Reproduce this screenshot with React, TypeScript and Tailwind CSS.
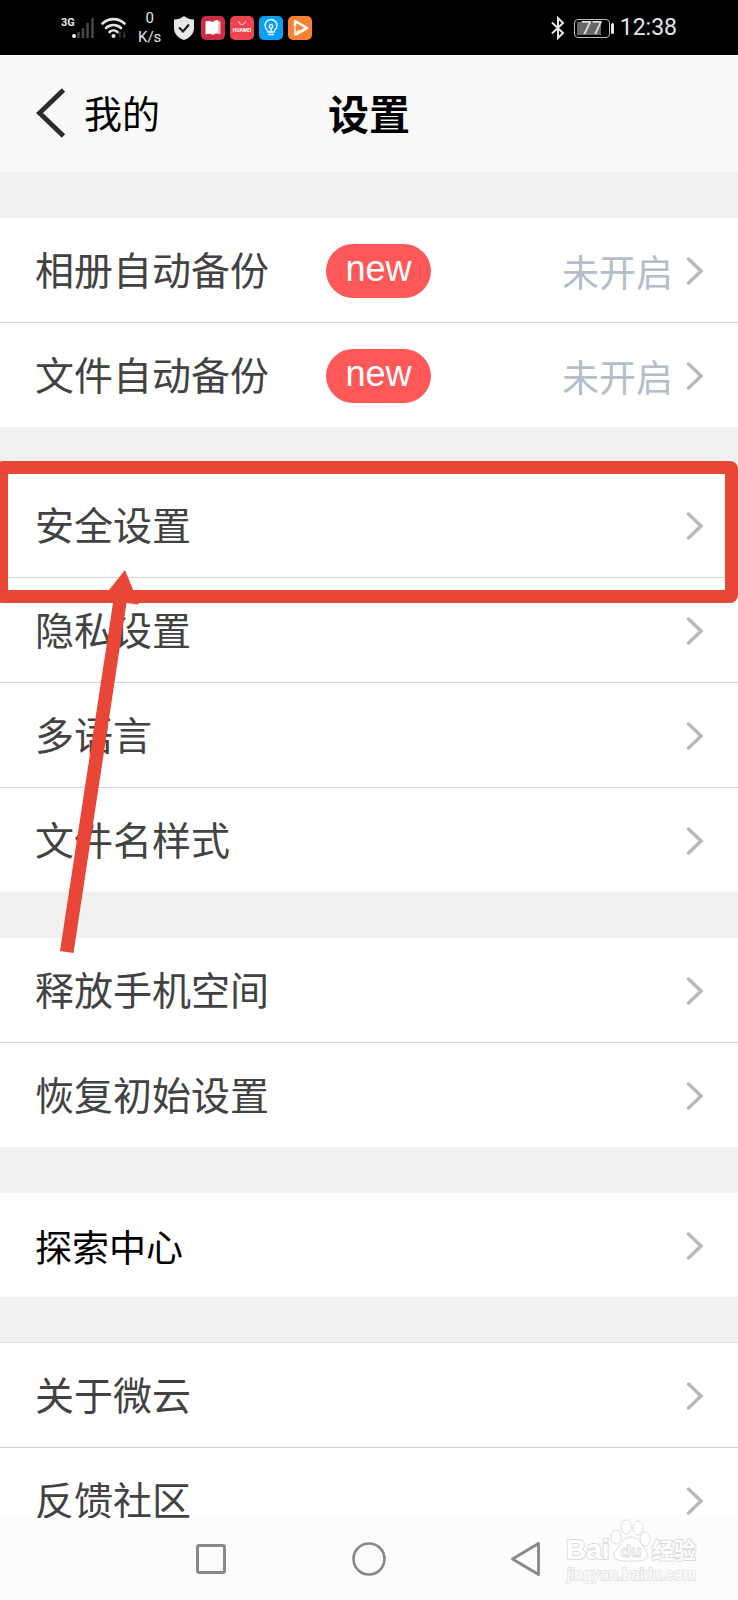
import React from 'react';

interface SettingItem {
  label: string;
  status?: string;
  isNew?: boolean;
  strong?: boolean;
}

interface SettingGroup {
  id: string;
  highlighted?: boolean;
  topLine?: boolean;
  items: SettingItem[];
}

const groups: SettingGroup[] = [
  {
    id: 'backup',
    items: [
      { label: '相册自动备份', status: '未开启', isNew: true },
      { label: '文件自动备份', status: '未开启', isNew: true },
    ],
  },
  {
    id: 'general',
    highlighted: true,
    items: [
      { label: '安全设置' },
      { label: '隐私设置' },
      { label: '多语言' },
      { label: '文件名样式' },
    ],
  },
  {
    id: 'storage',
    items: [{ label: '释放手机空间' }, { label: '恢复初始设置' }],
  },
  {
    id: 'explore',
    items: [{ label: '探索中心', strong: true }],
  },
  {
    id: 'about',
    topLine: true,
    items: [{ label: '关于微云' }, { label: '反馈社区' }],
  },
];

function StatusBar() {
  return (
    <div className="flex h-[55px] items-center justify-between bg-black px-[61px] pt-px font-[Roboto,sans-serif] text-[#e6e6e6]">
      <div className="flex items-center">
        <svg width="34" height="24" viewBox="0 0 34 24">
          <text x="0" y="10" fontSize="11" fontWeight="700" fill="#e6e6e6" fontFamily="Roboto, sans-serif">3G</text>
          <circle cx="13" cy="20" r="2" fill="#f0f0f0" />
          <path d="M17.500 22v-6M22 22V12M26.500 22V7M31.500 22V2" stroke="#484848" strokeWidth="2.500" />
        </svg>
        <svg className="ml-1.5" width="26" height="24" viewBox="0 0 26 24" fill="none" stroke="#e6e6e6" strokeWidth="2.600" strokeLinecap="round">
          <path d="M1.500 7.500a16 16 0 0 1 22 0" />
          <path d="M5 12a11 11 0 0 1 15 0" />
          <path d="M8.500 16a6 6 0 0 1 8 0" />
          <circle cx="12.500" cy="20" r="2" fill="#e6e6e6" stroke="none" />
          <path d="M19 16.500v5M19 16.500l-1.500 2M23 16.500v5M23 21.500l1.500-2" stroke="#555" strokeWidth="1" />
        </svg>
        <div className="ml-[11px] flex flex-col items-center text-[15px] leading-[19px]">
          <span>0</span>
          <span>K/s</span>
        </div>
        <svg className="ml-[13px]" width="20" height="24" viewBox="0 0 20 24">
          <path d="M10 0c3 2.500 6 3.500 10 3.500V12c0 6-4.500 10-10 12C4.500 22 0 18 0 12V3.500C4 3.500 7 2.500 10 0z" fill="#e8e8e8" />
          <path d="M5 11.500l4 4 6-7" fill="none" stroke="#1c1c1c" strokeWidth="2.200" />
        </svg>
        <div className="ml-[7px] flex gap-[5px]">
          <svg width="24" height="24" viewBox="0 0 24 24">
            <rect width="24" height="24" rx="5" fill="#cb2d45" />
            <path d="M4.500 5.500c3-1 5-.5 7.500.5v13c-2.500-1.500-5-1.500-7.500-.5z" fill="#fff" />
            <path d="M12 6c2.500-1.500 5-1.500 7.500-.5v13c-2.500-1-5-1-7.500.5z" fill="#f8b9c0" />
            <path d="M12 6c1.500-1.500 3-2 5-2v12.500c-2 0-3.500.5-5 2.500z" fill="#fff" />
          </svg>
          <svg width="24" height="24" viewBox="0 0 24 24">
            <rect width="24" height="24" rx="5" fill="#ee4350" />
            <path d="M8.500 5a3.500 3.500 0 0 0 7 0" fill="none" stroke="#ffd0d3" strokeWidth="1" />
            <text x="12" y="15.500" fontSize="5" fontWeight="700" textAnchor="middle" fill="#fff" fontFamily="Roboto, sans-serif">HUAWEI</text>
          </svg>
          <svg width="24" height="24" viewBox="0 0 24 24">
            <rect width="24" height="24" rx="5" fill="#08a0f7" />
            <g fill="none" stroke="#fff" strokeWidth="1.300" strokeLinecap="round">
              <path d="M9 16c0-2-3-3-3-6.500a6 6 0 0 1 12 0c0 3.500-3 4.500-3 6.500z" />
              <path d="M9.500 18.500h5M12 15.500v-3" />
              <circle cx="12" cy="10.500" r="1.800" />
            </g>
          </svg>
          <svg width="24" height="24" viewBox="0 0 24 24">
            <rect width="24" height="24" rx="5" fill="#f58235" />
            <path d="M7 10V5l12 7-11.500 6.500" fill="none" stroke="#fff" strokeWidth="2.600" strokeLinejoin="round" strokeLinecap="round" />
            <path d="M7 10v7l5-3" fill="none" stroke="#ffd9bd" strokeWidth="2" />
          </svg>
        </div>
      </div>

      <div className="flex items-center">
        <svg width="16" height="24" viewBox="0 0 16 24" fill="none" stroke="#e6e6e6" strokeWidth="2">
          <path d="M2 6.500l11 10.500-5 5V2l5 5L2 17.500" />
        </svg>
        <div className="ml-2 flex h-[19px] w-[36px] items-center justify-center rounded-[4px] border border-[#bdbdbd] bg-black p-[2px]">
          <span className="flex h-full w-full items-center justify-center bg-linear-to-r from-[#666] from-80% to-black to-80% text-[19px]">77</span>
        </div>
        <span className="ml-px h-[11px] w-[3px] rounded-xs bg-[#e6e6e6]"></span>
        <span className="ml-[6px] text-[23px] leading-7">12:38</span>
      </div>
    </div>
  );
}

function Chevron() {
  return (
    <svg className="ml-3 shrink-0" width="20" height="30" viewBox="0 0 20 30" fill="none" stroke="#b9b9b9" strokeWidth="3.500" strokeLinecap="round">
      <path d="M3.500 3L16 15 3.500 27" />
    </svg>
  );
}

function SettingRow({ item }: { item: SettingItem }) {
  return (
    <li>
      <button type="button" className="flex w-full items-center pb-[21px] pl-[35px] pr-[33px] pt-[23px] text-left">
        <span
          className={
            item.strong
              ? 'text-[37px] leading-[60px] text-black'
              : 'pb-1.5 text-[39px] leading-[54px] text-[#424242]'
          }
        >
          {item.label}
        </span>
        {item.isNew && (
          <span className="ml-[57px] flex h-[54px] w-[105px] items-center justify-center rounded-full bg-[#ff5859] pb-1 font-['Liberation_Sans',sans-serif] text-[36px] leading-[50px] text-white">
            new
          </span>
        )}
        <span className="ml-auto text-[37px] leading-[60px] text-[#b4bdc9]">{item.status}</span>
        <Chevron />
      </button>
    </li>
  );
}

// Red frame and arrow pointing at the first row of the group
function Highlight() {
  return (
    <div className="pointer-events-none absolute inset-x-0 -top-3 z-10">
      <div className="-ml-[5px] h-[142px] rounded-lg border-[13px] border-[#e84636]"></div>
      <svg className="absolute left-0 top-0" width="160" height="500" viewBox="0 0 160 500" fill="#e84636">
        <path d="M125 109L109 129L113 142L60 490L73.500 492L126.500 142L139 143.500z" />
      </svg>
    </div>
  );
}

function Watermark() {
  return (
    <svg className="absolute right-[36px] top-0" width="140" height="70" viewBox="0 0 140 70" fill="#fff" stroke="#dcdcdc" strokeWidth="1">
      <g fontFamily="'Liberation Sans', sans-serif" fontWeight="700" strokeWidth="2" paintOrder="stroke">
        <text x="4" y="41" fontSize="28">Bai</text>
        <text x="90" y="40" fontSize="22" fontFamily="'Noto Sans CJK SC', sans-serif">经验</text>
      </g>
      <ellipse cx="54" cy="19" rx="5" ry="7" />
      <ellipse cx="64" cy="9" rx="5" ry="7" />
      <ellipse cx="76" cy="10" rx="5" ry="7" />
      <ellipse cx="83" cy="21" rx="5" ry="7" />
      <path d="M69 19c8 0 10 8 14 12 5 6 1 12-5 12H60c-8 0-10-7-5-12 4-4 6-12 14-12z" />
      <text x="69" y="39" fontSize="17" fontWeight="700" textAnchor="middle" fontFamily="'Liberation Sans', sans-serif">du</text>
      <text x="5" y="62" fontSize="16" strokeWidth="2" paintOrder="stroke" stroke="#e4e4e4" fontFamily="'Liberation Sans', sans-serif">jingyan.baidu.com</text>
    </svg>
  );
}

function NavBar() {
  return (
    <nav className="fixed inset-x-0 bottom-0 z-20 flex h-[82px] items-center justify-center gap-[124px] bg-[#fcfcfc]">
      <button type="button" aria-label="最近任务">
        <svg width="34" height="34" viewBox="0 0 34 34" fill="none" stroke="#888" strokeWidth="3">
          <rect x="3.500" y="3.500" width="27" height="27" rx="1.500" />
        </svg>
      </button>
      <button type="button" aria-label="主页">
        <svg width="34" height="34" viewBox="0 0 34 34" fill="none" stroke="#888" strokeWidth="2.600">
          <circle cx="17" cy="17" r="15.500" />
        </svg>
      </button>
      <button type="button" aria-label="返回">
        <svg width="34" height="34" viewBox="0 0 34 34" fill="none" stroke="#888" strokeWidth="2.800" strokeLinejoin="round">
          <path d="M2.500 17L28.500 1.500v31z" />
        </svg>
      </button>
      <Watermark />
    </nav>
  );
}

export default function App() {
  return (
    <div
      lang="zh-CN"
      className="min-h-screen overflow-hidden bg-white font-['Noto_Sans_CJK_SC',sans-serif]"
    >
      <StatusBar />

      <header className="grid h-[117px] grid-cols-3 items-center bg-[#f9f9f9] pb-1">
        <button type="button" className="flex items-center pl-[36px] text-[38px] leading-[60px] text-black">
          <svg className="mr-[18px]" width="30" height="52" viewBox="0 0 30 52" fill="none" stroke="#2b2b2b" strokeWidth="4.800">
            <path d="M27.500 4L3.500 27l24 23" />
          </svg>
          我的
        </button>
        <h1 className="text-center text-[41px] font-bold leading-[60px] text-black">设置</h1>
      </header>

      <main>
        {groups.map((group) => (
          <section key={group.id} className="border-t-[46px] border-[#f1f1f1]">
            <div className="relative">
              {group.highlighted && <Highlight />}
              <ul
                className={
                  group.topLine
                    ? 'divide-y divide-[#d0d0d0] shadow-[0_-1px_0_#dedede]'
                    : 'divide-y divide-[#d4d4d4]'
                }
              >
                {group.items.map((item) => (
                  <SettingRow key={item.label} item={item} />
                ))}
              </ul>
            </div>
          </section>
        ))}
      </main>

      <NavBar />
    </div>
  );
}
